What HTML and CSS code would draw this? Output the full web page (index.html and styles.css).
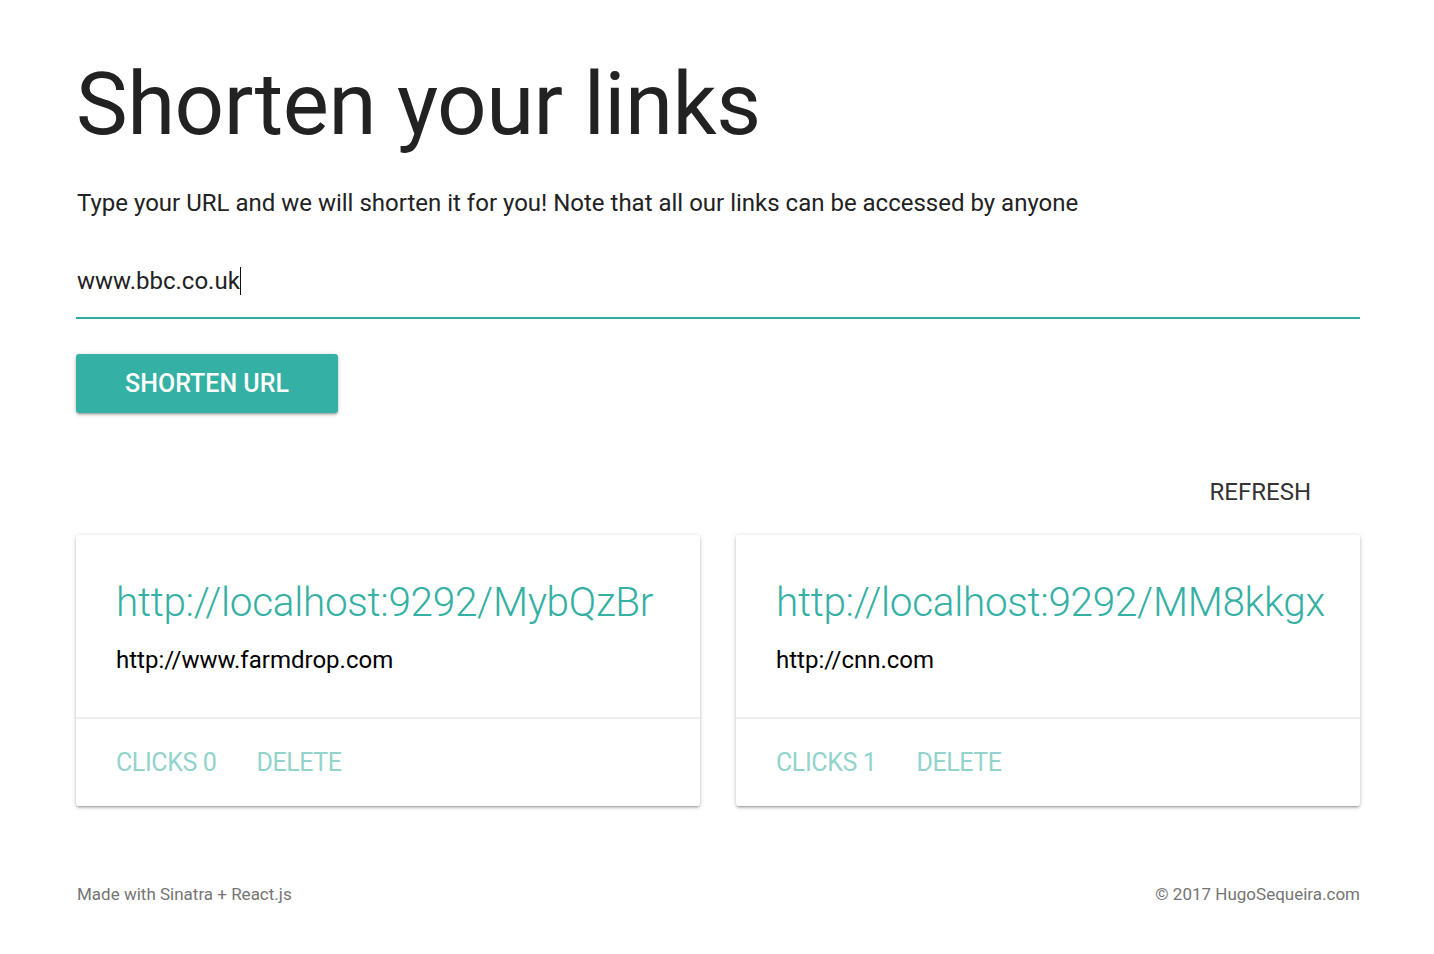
FILE: index.html
```html
<!DOCTYPE html>
<html lang="en">
<head>
<meta charset="utf-8">
<title>Shorten your links</title>
<link rel="stylesheet" href="styles.css">
</head>
<body>
<main class="container">
  <h1 class="title">Shorten your links</h1>
  <p class="lead">Type your URL and we will shorten it for you! Note that all our links can be accessed by anyone</p>
  <form class="form">
    <div class="field"><span class="value">www.bbc.co.uk</span><span class="caret"></span></div>
    <button type="button" class="btn">SHORTEN URL</button>
  </form>
  <div class="toolbar"><button type="button" class="flat">REFRESH</button></div>
  <section class="cards">
    <article class="card">
      <div class="card-content">
        <a class="card-title">http://localhost:9292/MybQzBr</a>
        <p class="original">http://www.farmdrop.com</p>
      </div>
      <div class="card-action"><a>CLICKS 0</a><a>DELETE</a></div>
    </article>
    <article class="card">
      <div class="card-content">
        <a class="card-title">http://localhost:9292/MM8kkgx</a>
        <p class="original">http://cnn.com</p>
      </div>
      <div class="card-action"><a>CLICKS 1</a><a>DELETE</a></div>
    </article>
  </section>
  <footer class="footer">
    <span>Made with Sinatra + React.js</span>
    <span>© 2017 HugoSequeira.com</span>
  </footer>
</main>
</body>
</html>
```
FILE: styles.css
```css
html, body {
  margin: 0;
  padding: 0;
  background: #fff;
  font-family: Roboto, "Liberation Sans", sans-serif;
  color: #222;
}
.container {
  width: 1284px;
  margin: 0 0 0 76px;
  padding-top: 52px;
}
.title {
  margin: 0;
  font-size: 87px;
  font-weight: 400;
  line-height: 104px;
  color: #222;
  letter-spacing: -0.5px;
}
.lead {
  margin: 32px 0 0 1px;
  font-size: 24px;
  line-height: 30px;
  color: #222;
}
.form {
  margin-top: 39px;
}
.field {
  height: 48px;
  border-bottom: 2px solid #2faa9e;
  display: flex;
  align-items: center;
  padding-bottom: 12px;
  box-sizing: content-box;
  font-size: 24px;
}
.value { margin-left: 1px; }
.caret {
  display: inline-block;
  width: 1px;
  height: 28px;
  background: #111;
}
.btn {
  margin-top: 35px;
  width: 262px;
  height: 59px;
  border: none;
  border-radius: 3px;
  background: #35b0a4;
  color: #fff;
  font-family: Roboto, "Liberation Sans", sans-serif;
  font-size: 25px;
  font-weight: 500;
  box-shadow: 0 2px 2px 0 rgba(0,0,0,0.14), 0 3px 1px -2px rgba(0,0,0,0.12), 0 1px 5px 0 rgba(0,0,0,0.2);
  display: block;
}
.toolbar {
  display: flex;
  justify-content: flex-end;
  margin-top: 59px;
}
.flat {
  background: none;
  border: none;
  font-family: Roboto, "Liberation Sans", sans-serif;
  font-size: 24px;
  color: #333;
  padding: 0 49px 0 0;
  height: 40px;
}
.cards {
  display: grid;
  grid-template-columns: minmax(0, 1fr) minmax(0, 1fr);
  gap: 36px;
  margin-top: 23px;
}
.card {
  background: #fff;
  border-radius: 3px;
  box-shadow: 0 2px 2px 0 rgba(0,0,0,0.14), 0 3px 1px -2px rgba(0,0,0,0.12), 0 1px 5px 0 rgba(0,0,0,0.2);
}
.card-content {
  padding: 39px 40px 42px;
  border-bottom: 2px solid #eee;
}
.card-title {
  display: block;
  color: #35b0a4;
  font-size: 40.5px;
  font-weight: 300;
  line-height: 56px;
  letter-spacing: -0.3px;
  white-space: nowrap;
}
.original {
  margin: 15px 0 0;
  font-size: 24px;
  line-height: 30px;
  color: #000;
}
.card-action {
  padding: 29px 40px 28px;
  display: flex;
  gap: 40px;
}
.card-action a {
  color: #92d3cc;
  font-size: 25px;
  line-height: 30px;
  letter-spacing: -0.4px;
}
.footer {
  display: flex;
  justify-content: space-between;
  margin-top: 78px;
  font-size: 17px;
  color: #757575;
  padding-left: 1px;
}
```
